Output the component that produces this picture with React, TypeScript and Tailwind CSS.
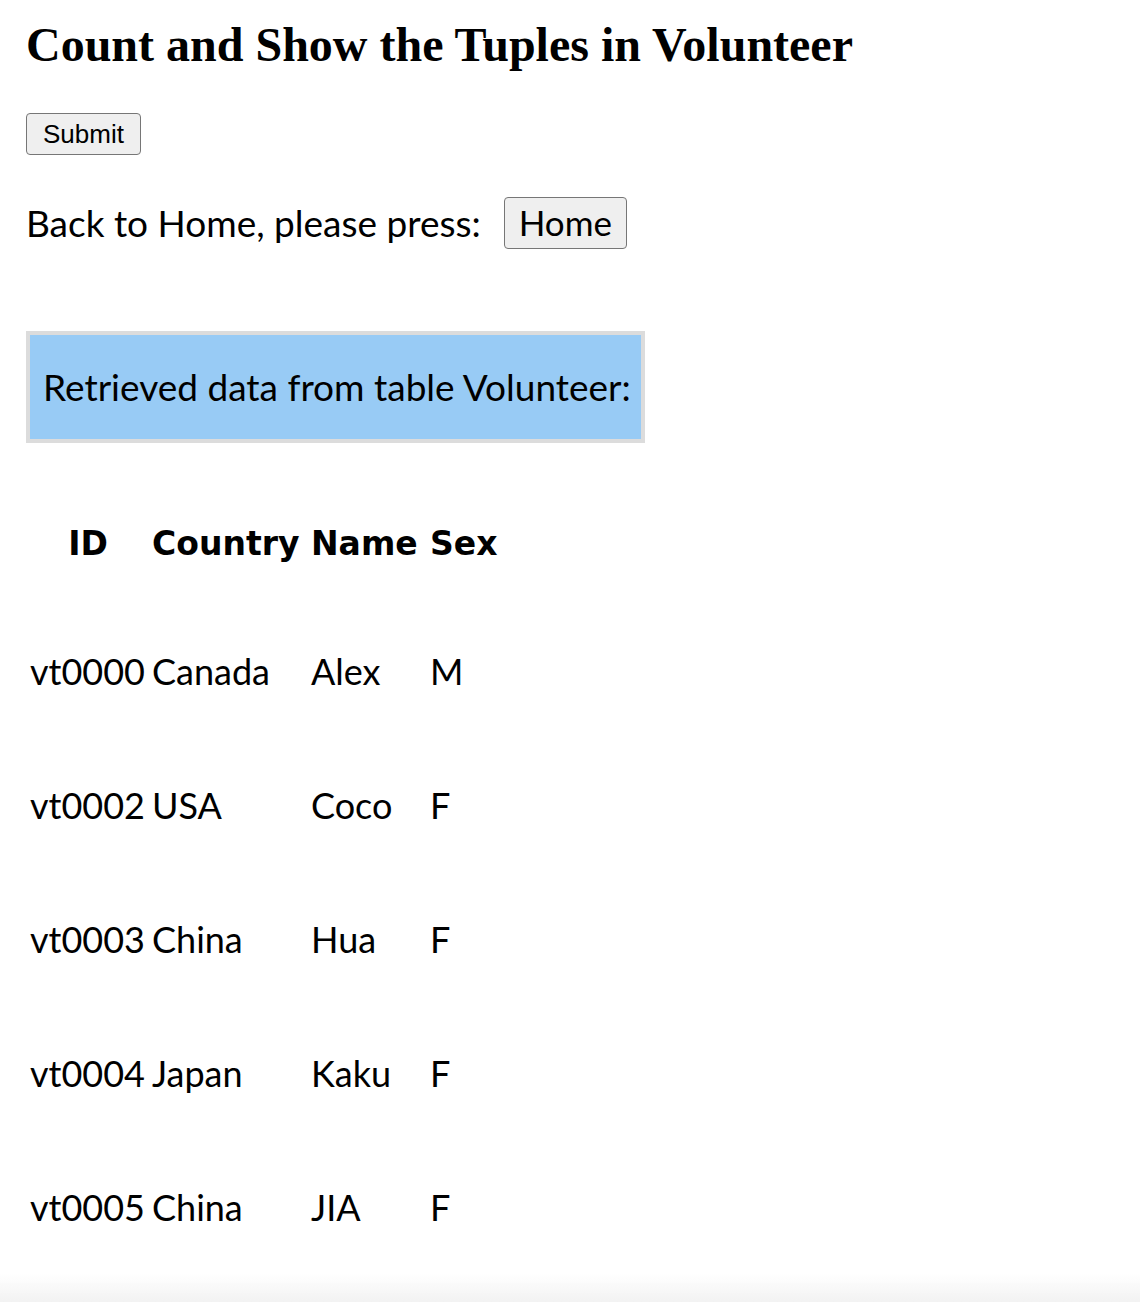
const rows = [
  { id: 'vt0000', country: 'Canada', name: 'Alex', sex: 'M' },
  { id: 'vt0002', country: 'USA', name: 'Coco', sex: 'F' },
  { id: 'vt0003', country: 'China', name: 'Hua', sex: 'F' },
  { id: 'vt0004', country: 'Japan', name: 'Kaku', sex: 'F' },
  { id: 'vt0005', country: 'China', name: 'JIA', sex: 'F' },
];

const sans = "font-['Lato','Open_Sans',sans-serif]";
const head = "font-['DejaVu_Sans',sans-serif] text-[33px] font-bold";

export default function App() {
  return (
    <div className="relative min-h-[1302px] overflow-hidden bg-white text-black">
      <div className="pl-[26px] pt-[19px]">
        {/* Header */}
        <h1 className="font-['Liberation_Serif',serif] text-[48px] font-bold leading-[52px]">
          Count and Show the Tuples in Volunteer
        </h1>

        <button className="mt-[42px] h-[42px] w-[115px] rounded-[4px] border border-[#767676] bg-[#efefef] font-['Liberation_Sans',Arial,sans-serif] text-[26px] leading-none">
          Submit
        </button>

        <div className={`mt-[40px] flex items-center ${sans} text-[37px]`}>
          <span>Back to Home, please press:</span>
          <button className="ml-[23px] h-[52px] w-[123px] rounded-[4px] border border-[#767676] bg-[#efefef] text-[35px] leading-none">
            Home
          </button>
        </div>

        {/* Banner */}
        <div className={`mt-[80px] flex h-[112px] w-[619px] items-center border-4 border-[#dcdcdc] bg-[#98cbf5] pl-[13px] ${sans} text-[37px]`}>
          Retrieved data from table Volunteer:
        </div>

        {/* Data table */}
        <table className={`mt-[40px] border-separate border-spacing-[2px] ${sans} text-[36px]`}>
          <thead>
            <tr>
              <th className={`h-[118px] w-[120px] px-[2px] text-center ${head}`}>ID</th>
              <th className={`w-[157px] px-[2px] text-left ${head}`}>Country</th>
              <th className={`w-[117px] px-[2px] text-left ${head}`}>Name</th>
              <th className={`w-[70px] px-[2px] text-left ${head}`}>Sex</th>
            </tr>
          </thead>
          <tbody>
            {rows.map((r) => (
              <tr key={r.id}>
                <td className="h-[132px] px-[2px]">{r.id}</td>
                <td className="px-[2px]">{r.country}</td>
                <td className="px-[2px]">{r.name}</td>
                <td className="px-[2px]">{r.sex}</td>
              </tr>
            ))}
          </tbody>
        </table>
      </div>

      <div className="pointer-events-none fixed inset-x-0 bottom-0 h-[28px] bg-gradient-to-b from-transparent to-[#f2f2f2]" />
    </div>
  );
}
